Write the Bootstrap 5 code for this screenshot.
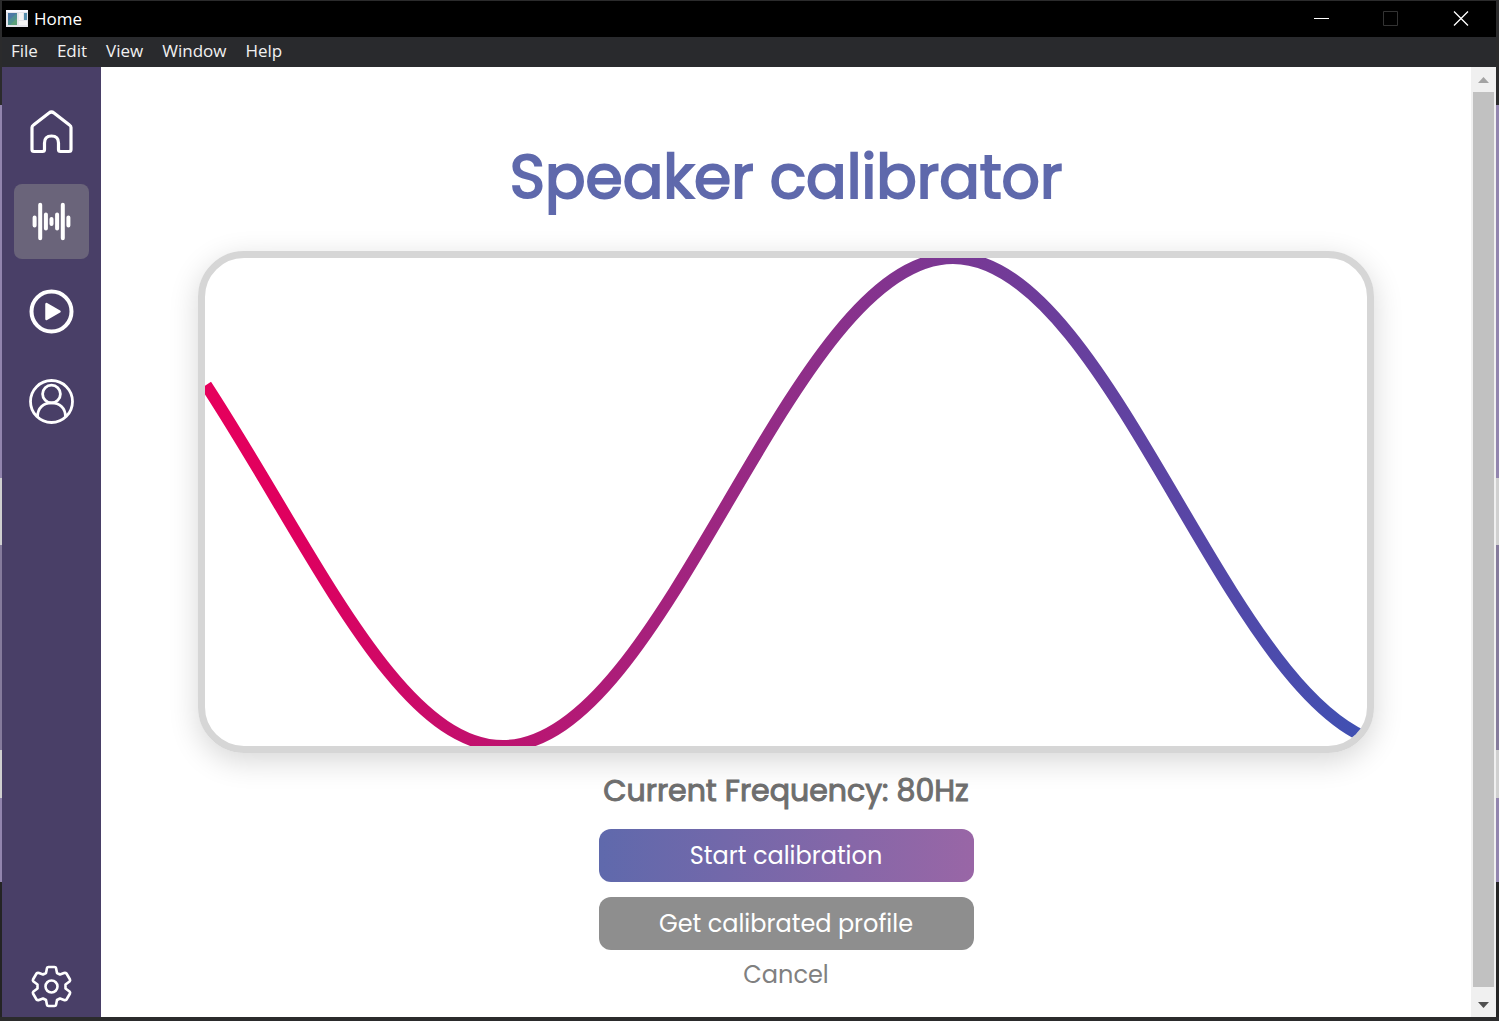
<!DOCTYPE html>
<html lang="en">
<head>
<meta charset="utf-8">
<meta name="viewport" content="width=device-width, initial-scale=1">
<title>Home</title>
<link rel="stylesheet" href="https://cdn.jsdelivr.net/npm/bootstrap@5.3.0/dist/css/bootstrap.min.css">
<style>
  body {
    font-family: Poppins, Inter, sans-serif;
    padding: 1px 3px 4px 2px;
    background:
      linear-gradient(#2b2b2c, #2b2b2c) 0 100% / 100% 4px no-repeat,
      linear-gradient(#2b2b2c 105px, #9285ae 105px, #9285ae 478px, #d0d0d0 478px, #d0d0d0 545px, #857b9c 545px, #857b9c 750px, #d0d0d0 750px, #d0d0d0 798px, #9285ae 798px, #9285ae 882px, #242424 882px);
  }
  .app-title, .app-menu { font-family: "Segoe UI", "Open Sans", "Noto Sans", sans-serif; font-size: 17px; line-height: 24px; }
  .app-title { height: 36px; background: #000; padding-left: 3px; gap: 5px; }
  .app-menu { height: 30px; background: #292a2d; padding: 0 0 2px 9px; gap: 19px; }
  .app-menu a { color: #f1f1f1; text-decoration: none; }
  .win-btns { height: 36px; }
  .win-btn { width: 70px; padding: 0; border: 0; background: none; }
  .side-bar { width: 99px; background: #493f67; padding: 27px 0 0; gap: 15px; }
  .side-link { width: 75px; height: 75px; border-radius: 8px; }
  .side-link.active { background: #6a647a; }
  .side-link svg { width: 47px; height: 47px; }
  .side-settings { height: 61px; }
  .stage { padding: 72px 97px 0; background: #fff; }
  .page-title { color: #5f69ac; font-size: 60px; line-height: 76px; font-weight: 400; -webkit-text-stroke: 2px #5f69ac; }
  .wave-frame { border: 7px solid #d6d6d6; border-radius: 46px; box-shadow: 0 8px 30px rgba(0,0,0,.16); overflow: hidden; margin-top: 36px; }
  .freq { color: #6e6e6e; font-size: 30px; line-height: 36px; font-weight: 400; -webkit-text-stroke: 1px #6e6e6e; margin: 20px 0; }
  .action-list { width: 375px; gap: 15px; }
  .action { height: 53px; border: 0; border-radius: 12px; color: #fff; font-size: 24px; line-height: 36px; }
  .action-start { background: linear-gradient(90deg, #5f69ac, #9966a6); }
  .action-profile { background: #8e8e8e; }
  .action-cancel { border: 0; background: none; color: #808080; font-size: 24px; line-height: 36px; padding: 0; margin-top: 7px; }
  .scroll-rail { width: 25px; background: #f0f0f0; }
  .scroll-rail svg { height: 25px; flex: none; }
  .scroll-thumb { margin: 0 2px; background: #c1c1c1; }
  .scroll-rail .scroll-end { height: 30px; }
</style>
</head>
<body class="vh-100 d-flex flex-column overflow-hidden">
<header>
  <div class="app-title d-flex align-items-center text-white">
    <svg width="24" height="20" viewBox="0 0 24 20"><rect x="1" y="1" width="22" height="17" fill="#e4e4ea"/><rect x="1" y="1" width="22" height="2" fill="#f8f8ff"/><rect x="3" y="4" width="9" height="12" fill="#4f8f91"/><path d="M3 4h9L3 12z" fill="#4c79a6"/><path d="M12 9v7H5z" fill="#5da079"/><rect x="14" y="4" width="4" height="7" fill="#f4f4f4"/><rect x="19" y="4" width="3" height="7" fill="#578fae"/><rect x="14" y="12" width="8" height="4" fill="#f4f4f4"/></svg>
    <span class="me-auto">Home</span>
    <div class="win-btns d-flex">
      <button class="win-btn d-flex align-items-center justify-content-center" aria-label="Minimize"><svg width="16" height="16" viewBox="0 0 16 16"><path d="M1 7.500h15" stroke="#fff"/></svg></button>
      <button class="win-btn d-flex align-items-center justify-content-center" aria-label="Maximize" disabled><svg width="16" height="16" viewBox="0 0 16 16" fill="none"><path d="M.5.5h14v14H.5z" stroke="#333"/></svg></button>
      <button class="win-btn d-flex align-items-center justify-content-center" aria-label="Close"><svg width="16" height="16" viewBox="0 0 16 16"><path d="M1 .5l14 14M15 .5L1 14.500" stroke="#fff" stroke-width="1.300"/></svg></button>
    </div>
  </div>
  <nav class="app-menu d-flex align-items-center" aria-label="Application">
    <a href="#">File</a><a href="#">Edit</a><a href="#">View</a><a href="#">Window</a><a href="#">Help</a>
  </nav>
</header>
<div class="d-flex flex-grow-1 overflow-hidden">
  <nav class="side-bar d-flex flex-column align-items-center flex-shrink-0" aria-label="Pages">
    <a class="side-link d-flex align-items-center justify-content-center" href="#" aria-label="Home">
      <svg viewBox="-.5 -1 47 47" fill="none" stroke="#fff" stroke-width="3.200" stroke-linejoin="round"><path d="M3.500 18.500Q3.500 17 5 16L20.500 4Q23 2 25.500 4L41 16Q42.500 17 42.500 18.500V40.500Q42.500 42.500 40.500 42.500H32Q30 42.500 30 40.500V34Q30 27 23 27T16 34V40.500Q16 42.500 14 42.500H5.500Q3.500 42.500 3.500 40.500Z"/></svg>
    </a>
    <a class="side-link active d-flex align-items-center justify-content-center" href="#" aria-label="Speaker calibrator" aria-current="page">
      <svg viewBox="-.5 -.5 47 47" stroke="#fff" stroke-width="4" stroke-linecap="round"><path d="M6.100 19v8M11.700 6.200v33.600M17.400 16v14M23 20.500v5M28.600 16v14M34.300 6.200v33.600M39.900 19v8"/></svg>
    </a>
    <a class="side-link d-flex align-items-center justify-content-center" href="#" aria-label="Play">
      <svg viewBox="-.5 -.5 47 47" fill="none"><circle cx="23" cy="23" r="20" stroke="#fff" stroke-width="4"/><path d="M18 15.500v15L31 23z" fill="#fff" stroke="#fff" stroke-width="2.500" stroke-linejoin="round"/></svg>
    </a>
    <a class="side-link d-flex align-items-center justify-content-center" href="#" aria-label="Account">
      <svg viewBox="-.5 -.5 47 47" fill="none" stroke="#fff" stroke-width="2.800"><circle cx="23" cy="23" r="21"/><circle cx="23" cy="15.500" r="8.900"/><path d="M9 38.500C9 29.500 15 24.400 23 24.400S37 29.500 37 38.500"/></svg>
    </a>
    <a class="side-link side-settings d-flex align-items-center justify-content-center mt-auto" href="#" aria-label="Settings">
      <svg viewBox="-.5 -.5 47 47" fill="none" stroke="#fff" stroke-width="2.600" stroke-linejoin="round"><circle cx="23" cy="23" r="6"/><path d="M18.500 4.500Q18.700 3.500 20 3.500H26Q27.300 3.500 27.500 4.500L28.500 9.500L31.500 11L35.500 9.500Q37 9 38 10L41.500 16Q42 17 41 18L37 21V25L41 28Q42 29 41.500 30L38 36Q37 37 35.500 36.500L31.500 35L28.500 36.500L27.500 41.500Q27.300 42.500 26 42.500H20Q18.700 42.500 18.500 41.500L17.500 36.500L14.500 35L10.500 36.500Q9 37 8 36L4.500 30Q4 29 5 28L9 25V21L5 18Q4 17 4.500 16L8 10Q9 9 10.500 9.500L14.500 11L17.500 9.500Z"/></svg>
    </a>
  </nav>
  <main class="stage flex-grow-1 d-flex flex-column align-items-center overflow-hidden">
    <h1 class="page-title mb-0">Speaker calibrator</h1>
    <div class="wave-frame w-100 flex-shrink-0">
      <svg class="d-block w-100" viewBox="0 0 1162 488" fill="none" role="img" aria-label="Sine wave">
        <defs><linearGradient id="tone" gradientUnits="userSpaceOnUse" x1="0" y1="0" x2="1162" y2="0"><stop offset="0" stop-color="#e6005c"/><stop offset=".08" stop-color="#de005f"/><stop offset=".5" stop-color="#912d87"/><stop offset="1" stop-color="#3f51b3"/></linearGradient></defs>
        <path d="M1 127C108 291 193 488 298 488C462 488 584 0 748 0C912 0 1034 488 1198 488" stroke="url(#tone)" stroke-width="12"/>
      </svg>
    </div>
    <h2 class="freq">Current Frequency: 80Hz</h2>
    <div class="action-list d-flex flex-column">
      <button class="action action-start">Start calibration</button>
      <button class="action action-profile">Get calibrated profile</button>
    </div>
    <button class="action-cancel">Cancel</button>
  </main>
  <div class="scroll-rail d-flex flex-column flex-shrink-0" aria-hidden="true">
    <svg viewBox="0 0 25 25"><path d="M7 16l5.500-6 5.500 6z" fill="#a3a3a3"/></svg>
    <div class="scroll-thumb flex-grow-1"></div>
    <svg class="scroll-end" viewBox="0 0 25 30"><path d="M7 15h11l-5.500 6z" fill="#505050"/></svg>
  </div>
</div>
<script src="https://cdn.jsdelivr.net/npm/bootstrap@5.3.0/dist/js/bootstrap.bundle.min.js"></script>
</body>
</html>
